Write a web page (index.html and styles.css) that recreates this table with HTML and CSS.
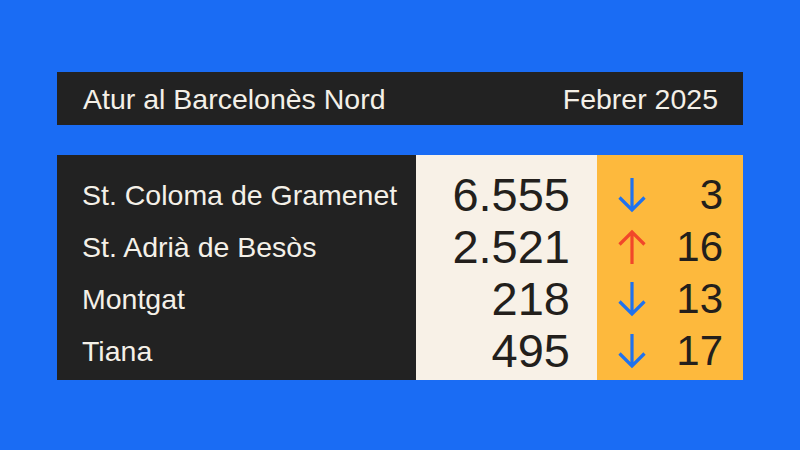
FILE: index.html
```html
<!DOCTYPE html>
<html lang="ca">
<head>
    <meta charset="UTF-8">
    <meta name="viewport" content="width=device-width, initial-scale=1.0">
    <title>Atur al Barcelonès Nord</title>
    <link rel="stylesheet" href="styles.css">
</head>
<body>
<div class="panel">
    <div class="header">
        <span class="title">Atur al Barcelonès Nord</span>
        <span class="date">Febrer 2025</span>
    </div>

    <div class="table">
        <div class="col names">
            <div class="row">St. Coloma de Gramenet</div>
            <div class="row">St. Adrià de Besòs</div>
            <div class="row">Montgat</div>
            <div class="row">Tiana</div>
        </div>
        <div class="col values">
            <div class="row">6.555</div>
            <div class="row">2.521</div>
            <div class="row">218</div>
            <div class="row">495</div>
        </div>
        <div class="col changes">
            <div class="row">
                <svg class="arrow down" viewBox="0 0 30 36"><path d="M15 1 V33 M2.5 20.5 L15 33 L27.5 20.5"/></svg>
                <span>3</span>
            </div>
            <div class="row">
                <svg class="arrow up" viewBox="0 0 30 36"><path d="M15 35 V3 M2.5 15.5 L15 3 L27.5 15.5"/></svg>
                <span>16</span>
            </div>
            <div class="row">
                <svg class="arrow down" viewBox="0 0 30 36"><path d="M15 1 V33 M2.5 20.5 L15 33 L27.5 20.5"/></svg>
                <span>13</span>
            </div>
            <div class="row">
                <svg class="arrow down" viewBox="0 0 30 36"><path d="M15 1 V33 M2.5 20.5 L15 33 L27.5 20.5"/></svg>
                <span>17</span>
            </div>
        </div>
    </div>
</div>
</body>
</html>
```

FILE: styles.css
```css
body {
    margin: 0;
    padding: 0;
    font-family: 'Liberation Sans', Arial, sans-serif;
    background-color: #1a6cf4;
    height: 450px;
    overflow: hidden;
}

.panel {
    padding: 72px 57px 0;
    display: flex;
    flex-direction: column;
    gap: 30px;
}

.header {
    height: 53px;
    box-sizing: border-box;
    padding: 2px 25px 0 26px;
    background-color: #222222;
    color: #f4f0e8;
    font-size: 28.5px;
    display: flex;
    justify-content: space-between;
    align-items: center;
}

.table {
    display: flex;
    height: 225px;
}

.col {
    padding: 14px 0 3px;
    display: flex;
    flex-direction: column;
}

.row {
    height: 52px;
    line-height: 52px;
    white-space: nowrap;
}

.names {
    width: 359px;
    padding-left: 25px;
    box-sizing: border-box;
    background-color: #222222;
    color: #f4f0e8;
    font-size: 28.5px;
}

.values {
    width: 181px;
    padding-right: 27px;
    box-sizing: border-box;
    background-color: #f8f1e7;
    color: #231f1c;
    font-size: 47px;
    text-align: right;
}

.changes {
    flex: 1;
    padding-left: 20px;
    padding-right: 20px;
    background-color: #fdb93d;
    color: #231f1c;
    font-size: 42px;
}

.changes .row {
    display: flex;
    justify-content: space-between;
    align-items: center;
}

.arrow {
    width: 30px;
    height: 36px;
    fill: none;
    stroke-width: 3.2;
    stroke-linecap: butt;
    stroke-linejoin: miter;
}

.arrow.down {
    stroke: #1f72ee;
}

.arrow.up {
    stroke: #f1472a;
}
```
